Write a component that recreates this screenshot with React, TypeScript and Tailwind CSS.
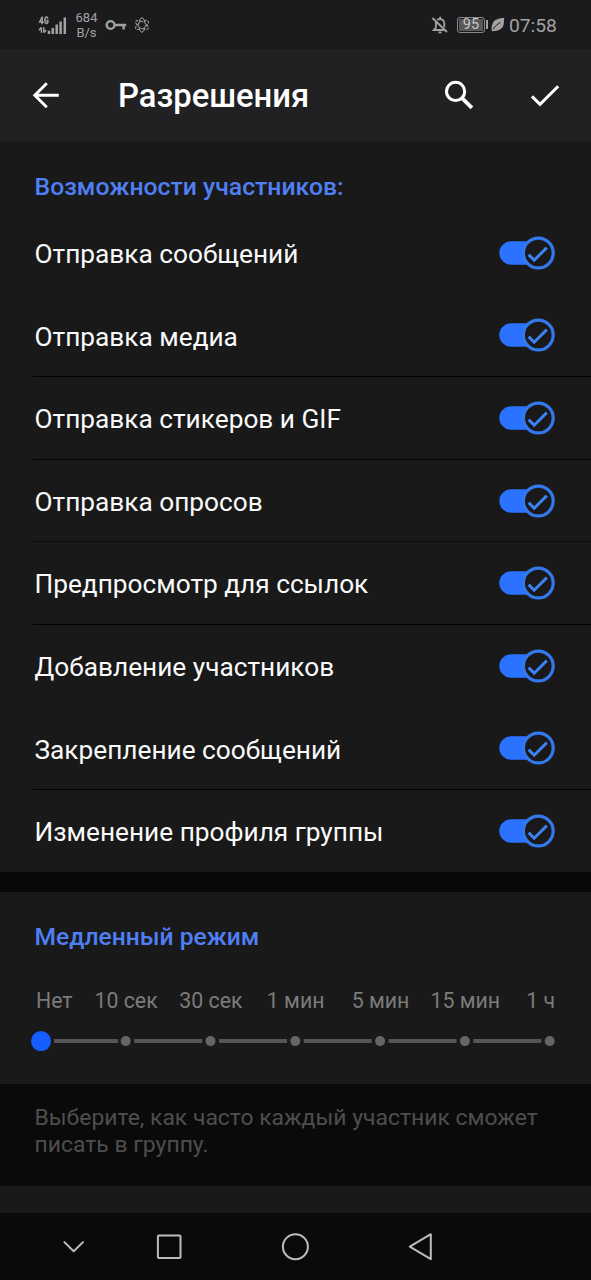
import React from "react";

const permissions = [
  { label: "Отправка сообщений", divider: "bg-[#171717]" },
  { label: "Отправка медиа", divider: "bg-[#020202]" },
  { label: "Отправка стикеров и GIF", divider: "bg-[#020202]" },
  { label: "Отправка опросов", divider: "bg-[#0a0a0a]" },
  { label: "Предпросмотр для ссылок", divider: "bg-[#020202]" },
  { label: "Добавление участников", divider: "bg-[#151515]" },
  { label: "Закрепление сообщений", divider: "bg-[#020202]" },
  { label: "Изменение профиля группы", divider: "" },
];

const delays = ["Нет", "10 сек", "30 сек", "1 мин", "5 мин", "15 мин", "1 ч"];

function StatusBar() {
  return (
    <div className="flex h-[49px] shrink-0 items-center bg-[#1b1b1d] text-[#a2a2a2]">
      <svg className="ml-[38px] h-[22px] w-[30px]" viewBox="0 0 30 22" fill="none" stroke="currentColor">
        <path d="M4.2 2.4v7.8M4.2 2.8L1.7 8H5.8" strokeWidth="1.5" />
        <path d="M9.7 4.6C9.5 2.4 7 2.4 7 4.8v2.8c0 2.4 2.8 2.4 2.8.2V6.6H8.4" strokeWidth="1.6" />
        <path d="M3.4 13.2v5.6M1 16.2L3.2 13.6M5.8 13.2v5.6M8.2 16L6 18.4" strokeWidth="1.5" />
        <path d="M11 16.8V20M14.8 14V20M18.7 10.6V20M22.6 7.4V20M26.8 3.6V20" strokeWidth="2.5" />
      </svg>
      <div className="ml-[5px] w-[27px] pt-px text-center text-[13px] leading-[15px]">
        <div>684</div>
        <div>B/s</div>
      </div>
      <svg className="ml-[5px] h-[12px] w-[22px]" viewBox="0 0 22 12" fill="none" stroke="currentColor" strokeWidth="2.4">
        <circle cx="5.6" cy="6" r="3.9" />
        <path d="M9.6 6H21.2M18.6 6v4.6" />
      </svg>
      <svg className="ml-[7px] h-[18px] w-[16px]" viewBox="0 0 16 18" fill="none" stroke="currentColor" strokeWidth="1">
        <ellipse cx="8" cy="9" rx="3" ry="7.2" />
        <ellipse cx="8" cy="9" rx="3" ry="7.2" transform="rotate(60 8 9)" strokeDasharray="3 1" />
        <ellipse cx="8" cy="9" rx="3" ry="7.2" transform="rotate(120 8 9)" strokeDasharray="3 1" />
        <circle cx="8" cy="9" r="3" fill="#1b1b1d" stroke="none" />
      </svg>
      <svg className="ml-[281px] h-[18px] w-[18px]" viewBox="0 0 18 18" fill="none" stroke="currentColor" strokeWidth="1.8">
        <path d="M6.3 4A4.3 4.3 0 0 1 13.3 7v4.2M4.9 6v5.5L2.8 14H13.5M9.2 .8v2M1.4 2L16 16" />
        <path d="M7.5 16.4h3" />
      </svg>
      <div className="ml-[8px] flex h-[16px] w-[28px] items-center justify-center rounded-[3px] border border-[#8a8a8a] p-[1px]">
        <div className="flex h-full w-full items-center justify-center bg-[#58585a] pt-px text-[14.5px] leading-none text-[#c4c4c4]">95</div>
      </div>
      <div className="ml-[1px] h-[9px] w-[2px] bg-[#a2a2a2]" />
      <svg className="ml-[3px] h-[15px] w-[14px]" viewBox="0 0 14 15" fill="none">
        <path d="M13.2.8C8 1.5 3.8 2.2 2 5.7.4 8.6.2 11.8 1 14.2c5 .2 10-1.4 11.5-5.9.8-2.6.2-5 .7-7.5Z" fill="#a2a2a2" />
        <path d="M2 12.2C4 9.2 6.4 7.1 9.4 5.4" stroke="#1b1b1d" strokeWidth="1" />
      </svg>
      <div className="ml-[4px] pt-[2px] text-[19.2px] leading-none">07:58</div>
    </div>
  );
}

function AppBar() {
  return (
    <div className="flex h-[92px] shrink-0 items-center bg-[#212123] text-white">
      <svg className="ml-[32px] h-[28px] w-[28px]" viewBox="0 0 28 28" fill="none" stroke="currentColor" strokeWidth="2.9">
        <path d="M26.8 14.2H3M14.8 2.2L2.8 14.2l12 12" />
      </svg>
      <h1 className="ml-[58px] w-[326px] pt-[2px] text-[32.8px] leading-none font-medium">Разрешения</h1>
      <svg className="h-[30px] w-[30px]" viewBox="0 0 30 30" fill="none" stroke="currentColor">
        <circle cx="11.6" cy="11.4" r="9.1" strokeWidth="3" />
        <path d="M18.8 18.8l9.1 9.1" strokeWidth="3.8" />
      </svg>
      <svg className="ml-[56px] h-[24px] w-[30px]" viewBox="0 0 30 24" fill="none" stroke="currentColor" strokeWidth="3">
        <path d="M2 13.4l8 8L28.2 3.3" />
      </svg>
    </div>
  );
}

function Toggle() {
  return (
    <svg className="h-[34px] w-[58px]" viewBox="0 0 58 34" fill="none">
      <path d="M13 5.3H40V28.7H13a11.7 11.7 0 0 1 0-23.4Z" fill="#2b73ff" />
      <circle cx="40.3" cy="17" r="14.9" fill="#191919" stroke="#3478ee" strokeWidth="3.2" />
      <path d="M30.6 18.6l5.6 5.6L48.8 11.6" stroke="#3d82f2" strokeWidth="3" />
    </svg>
  );
}

function SlowMode() {
  return (
    <section className="h-[192px] shrink-0 bg-[#191919] pt-[32px]">
      <h2 className="pl-[34.5px] text-[24.6px] leading-[26px] font-medium text-[#4f7ff3]">Медленный режим</h2>
      <div className="mt-[39px] flex px-[36px] text-[21.3px] leading-[24px] whitespace-nowrap text-[#7b7b7b]">
        {delays.map((d, i) => (
          <span
            key={d}
            className={
              i === 0
                ? "w-[47.7px] shrink-0"
                : i === delays.length - 1
                  ? "flex-1 text-right"
                  : "w-[84.8px] shrink-0 text-center"
            }
          >
            {d}
          </span>
        ))}
      </div>
      <svg className="mt-[18px] ml-[31px] h-[20px] w-[525px]" viewBox="0 0 525 20">
        {delays.slice(1).map((d, i) => (
          <g key={d} fill="#656565">
            <rect x={i === 0 ? 23 : 18.4 + i * 84.8} y="8" width={i === 0 ? 64 : 68} height="4" fill="#555555" />
            <circle cx={94.7 + i * 84.8} cy="10.1" r="5" />
          </g>
        ))}
        <circle cx="10" cy="10.1" r="10" fill="#165dff" />
      </svg>
    </section>
  );
}

function NavBar() {
  return (
    <div className="flex h-[67px] shrink-0 items-center bg-[#0a0a0a] text-[#bdbdbd]">
      <svg className="ml-[62px] h-[14px] w-[24px]" viewBox="0 0 24 14" fill="none" stroke="currentColor" strokeWidth="2" strokeLinecap="round" strokeLinejoin="round">
        <path d="M2.4 2.1l9.3 9.1L21 2.1" />
      </svg>
      <svg className="ml-[70px] h-[26px] w-[26px]" viewBox="0 0 26 26" fill="none" stroke="currentColor" strokeWidth="2">
        <rect x="1.9" y="1.5" width="22.6" height="22.6" rx="1" />
      </svg>
      <svg className="ml-[99px] h-[28px] w-[28px]" viewBox="0 0 28 28" fill="none" stroke="currentColor" strokeWidth="2">
        <circle cx="14.4" cy="13.7" r="12.5" />
      </svg>
      <svg className="ml-[99px] h-[28px] w-[26px]" viewBox="0 0 26 28" fill="none" stroke="currentColor" strokeWidth="2" strokeLinejoin="round">
        <path d="M22.8 1.2v25L1.8 13.7Z" />
      </svg>
    </div>
  );
}

export default function App() {
  return (
    <div className="flex h-[1280px] w-[591px] flex-col overflow-hidden bg-[#0a0a0a] font-['Roboto',sans-serif]">
      <StatusBar />
      <AppBar />
      <section className="h-[731px] shrink-0 bg-[#191919] pt-[33px]">
        <h2 className="pl-[34.5px] text-[24.75px] leading-[26px] font-medium text-[#4f7ff3]">Возможности участников:</h2>
        <div className="mt-[12px]">
          {permissions.map((p) => (
            <div key={p.label} className="flex h-[82.6px] flex-col pl-[33px]">
              <div className="flex flex-1 items-center justify-between pr-[35.3px] pl-[1.5px]">
                <span className="pt-[2.6px] text-[26.24px] leading-[30px] text-[#fafafa]">{p.label}</span>
                <Toggle />
              </div>
              <div className={"h-px " + p.divider} />
            </div>
          ))}
        </div>
      </section>
      <div className="h-[20px] shrink-0 bg-[#090909]" />
      <SlowMode />
      <p className="h-[102px] shrink-0 bg-[#0a0a0a] pt-[20px] pl-[34.5px] text-[22.93px] leading-[27px] text-[#4e4e4e]">
        Выберите, как часто каждый участник сможет
        <br />
        писать в группу.
      </p>
      <div className="h-[27px] shrink-0 bg-[#191919]" />
      <NavBar />
    </div>
  );
}
